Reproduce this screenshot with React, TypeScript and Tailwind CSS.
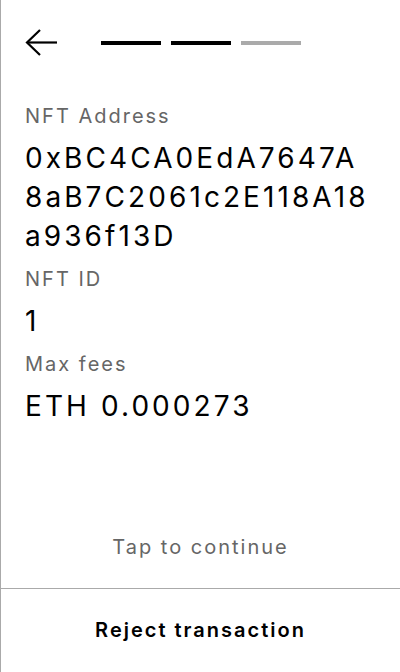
import { useState } from "react";

const font = { fontFamily: "Inter, 'Noto Sans', sans-serif" };

function Field({ label, value }: { label: string; value: string }) {
  return (
    <div className="flex flex-col">
      <span className="text-[20px] leading-[28px] tracking-[0.1em] text-[#666666]">{label}</span>
      <span className="mt-[9px] max-w-[346px] text-[28px] leading-[39px] tracking-[0.11em] text-black break-all">
        {value}
      </span>
    </div>
  );
}

export default function App() {
  const [step] = useState(2);

  return (
    <div className="w-[400px] h-[672px] bg-white border-l border-[#aaaaaa] flex flex-col" style={font}>
      <div className="flex items-center h-[84px] pl-6 pt-[2px]">
        <button className="w-8 h-8 flex items-center justify-center">
          <svg width="32" height="28" viewBox="0 0 32 28" fill="none" stroke="black" strokeWidth="2.2">
            <path d="M32 13.5H2" />
            <path d="M15 1L2 13.5L15 26" />
          </svg>
        </button>
        <div className="flex gap-[10px] ml-[44px] mb-[1px]">
          {[0, 1, 2].map((i) => (
            <div
              key={i}
              className={i < step ? "w-[60px] h-[4px] bg-black" : "w-[60px] h-[4px] bg-[#aaaaaa]"}
            />
          ))}
        </div>
      </div>

      <div className="flex flex-col gap-[9px] px-6 pt-[18px]">
        <Field label="NFT Address" value="0xBC4CA0EdA7647A8aB7C2061c2E118A18a936f13D" />
        <Field label="NFT ID" value="1" />
        <Field label="Max fees" value="ETH 0.000273" />
      </div>

      <div className="mt-auto flex items-center justify-center h-[44px] mb-[19px] text-[20px] tracking-[0.1em] text-[#666666]">
        Tap to continue
      </div>
      <div className="border-t border-[#aaaaaa] h-[84px] flex items-center justify-center">
        <button className="text-[20px] font-semibold tracking-[0.1em] text-black -mt-[2px]">Reject transaction</button>
      </div>
    </div>
  );
}
